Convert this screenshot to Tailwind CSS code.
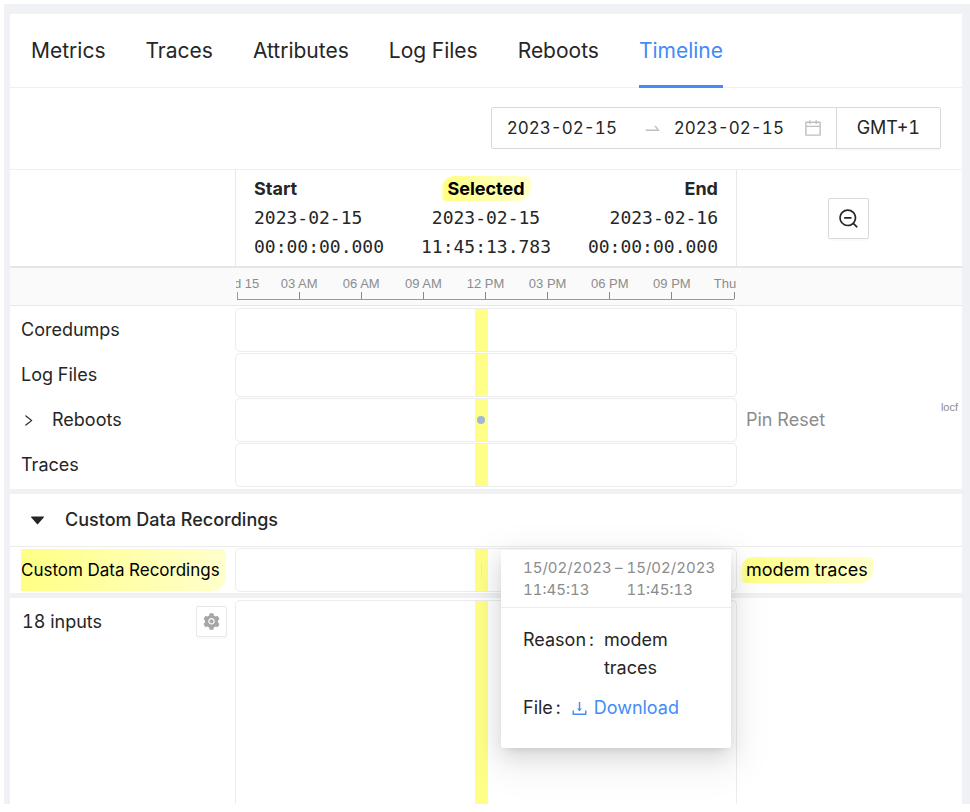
<!DOCTYPE html>
<html lang="en">
<head>
<meta charset="utf-8">
<meta name="viewport" content="width=device-width, initial-scale=1">
<title>Device Timeline</title>
<script src="https://cdn.jsdelivr.net/npm/@tailwindcss/browser@4"></script>
</head>
<body class="bg-white font-['Inter',sans-serif] text-[18px] leading-7 text-[#262626] tabular-nums">
<div class="flex min-h-screen flex-col pt-1 pb-2 pl-1">
<main class="flex flex-1 flex-col bg-[#f0f1f5] pt-[10px] pr-2 pl-[6px]">

  <!-- Tabs -->
  <nav class="flex gap-10 border-b border-[#f0f0f0] bg-white pl-[21px] text-[21px]">
    <a href="#" class="-mb-px border-b-3 border-transparent pt-[23px] pb-5">Metrics</a>
    <a href="#" class="-mb-px border-b-3 border-transparent pt-[23px] pb-5">Traces</a>
    <a href="#" class="-mb-px border-b-3 border-transparent pt-[23px] pb-5">Attributes</a>
    <a href="#" class="-mb-px border-b-3 border-transparent pt-[23px] pb-5">Log Files</a>
    <a href="#" class="-mb-px border-b-3 border-transparent pt-[23px] pb-5">Reboots</a>
    <a href="#" aria-current="page" class="-mb-px border-b-3 border-[#428bf9] pt-[23px] pb-5 text-[#428bf9]">Timeline</a>
  </nav>

  <!-- Date range and time zone -->
  <div class="flex justify-end border-b border-[#f0f0f0] bg-white pt-[19px] pr-[21px] pb-5">
    <div class="flex h-[42px] items-center rounded-l-xs border border-[#d9d9d9] pr-[13px] pl-[15px]">
      <input type="text" aria-label="Start date" value="2023-02-15" class="w-[136px] text-[17px] outline-none">
      <svg class="mr-3 size-[19px] fill-[#bfbfbf]" viewBox="0 0 1024 1024" aria-hidden="true"><path d="M873.1 596.2l-164-208A32 32 0 00684 376h-64.8c-6.7 0-10.4 7.7-6.3 13l144.3 183H152c-4.4 0-8 3.6-8 8v60c0 4.4 3.6 8 8 8h695.9c26.8 0 41.7-30.8 25.2-51.8z"/></svg>
      <input type="text" aria-label="End date" value="2023-02-15" class="w-[129px] text-[17px] outline-none">
      <svg class="size-5 fill-[#bfbfbf]" viewBox="0 0 1024 1024" aria-hidden="true"><path d="M880 184H712v-64c0-4.400-3.600-8-8-8h-56c-4.400 0-8 3.600-8 8v64H384v-64c0-4.400-3.600-8-8-8h-56c-4.400 0-8 3.600-8 8v64H144c-17.700 0-32 14.300-32 32v664c0 17.700 14.300 32 32 32h736c17.700 0 32-14.300 32-32V216c0-17.700-14.300-32-32-32zm-40 656H184V460h656v380zM184 392V256h128v48c0 4.400 3.600 8 8 8h56c4.400 0 8-3.600 8-8v-48h256v48c0 4.400 3.600 8 8 8h56c4.400 0 8-3.600 8-8v-48h128v136H184z"/></svg>
    </div>
    <button type="button" class="-ml-px h-[42px] rounded-r-xs border border-[#d9d9d9] px-5 shadow-[0_2px_0_rgba(0,0,0,0.02)]">GMT+1</button>
  </div>

  <!-- Range summary -->
  <div class="grid grid-cols-[225px_1fr_225px] border-b-2 border-[#e6e6e6] bg-white">
    <div></div>
    <div class="flex justify-between border-x border-[#e8e8e8] px-[18px] pt-[5px] pb-[5px] font-['DejaVu_Sans_Mono',monospace] leading-[29px]">
      <div>
        <div class="font-['Inter',sans-serif] leading-7 font-bold">Start</div>
        <div>2023-02-15</div>
        <div>00:00:00.000</div>
      </div>
      <div class="text-center">
        <div class="font-['Inter',sans-serif] leading-7 font-bold"><mark class="inline-block rounded-tl-[14px] rounded-tr-[5px] rounded-br-[14px] rounded-bl-[5px] bg-transparent bg-[linear-gradient(to_right,rgba(255,255,0,0.1),rgba(255,255,0,0.48)_4%,rgba(255,255,0,0.2))] px-[6px] leading-[25px] text-black">Selected</mark></div>
        <div>2023-02-15</div>
        <div>11:45:13.783</div>
      </div>
      <div class="text-right">
        <div class="font-['Inter',sans-serif] leading-7 font-bold">End</div>
        <div>2023-02-16</div>
        <div>00:00:00.000</div>
      </div>
    </div>
    <div class="flex items-center justify-center pr-[2px]">
      <button type="button" aria-label="Zoom out" class="flex size-[41px] items-center justify-center rounded-xs border border-[#d9d9d9] shadow-[0_2px_0_rgba(0,0,0,0.02)]">
        <svg class="size-[23px] fill-[#262626]" viewBox="0 0 1024 1024" aria-hidden="true"><path d="M637 443H325c-4.400 0-8 3.600-8 8v60c0 4.400 3.600 8 8 8h312c4.400 0 8-3.600 8-8v-60c0-4.400-3.600-8-8-8zm284 424L775 721c122.100-148.900 113.600-369.500-26-509-148-148.100-388.400-148.100-537 0-148.100 148.600-148.100 389 0 537 139.500 139.600 360.100 148.100 509 26l146 146c3.200 2.800 8.300 2.800 11 0l43-43c2.800-2.700 2.800-7.800 0-11zM696 696c-118.800 118.700-311.200 118.700-430 0-118.700-118.800-118.700-311.200 0-430 118.800-118.700 311.200-118.700 430 0 118.700 118.800 118.700 311.200 0 430z"/></svg>
      </button>
    </div>
  </div>

  <!-- Time axis -->
  <div class="grid grid-cols-[225px_1fr_225px] border-b border-[#e8e8e8] bg-[#fafafa] pt-2 pb-[5px]">
    <div></div>
    <div class="mx-px overflow-hidden">
      <div class="mr-[2px] ml-px flex justify-between border-b border-[#999] text-[13px] leading-4 whitespace-nowrap text-[#8c8c8c] font-['Liberation_Sans',Arial,sans-serif]">
        <div class="flex w-0 flex-col items-center"><span>Wed 15</span><i class="h-[7px] w-px shrink-0 bg-[#999]"></i></div>
        <div class="flex w-0 flex-col items-center"><span>03 AM</span><i class="h-[7px] w-px shrink-0 bg-[#888]"></i></div>
        <div class="flex w-0 flex-col items-center"><span>06 AM</span><i class="h-[7px] w-px shrink-0 bg-[#888]"></i></div>
        <div class="flex w-0 flex-col items-center"><span>09 AM</span><i class="h-[7px] w-px shrink-0 bg-[#888]"></i></div>
        <div class="flex w-0 flex-col items-center"><span>12 PM</span><i class="h-[7px] w-px shrink-0 bg-[#888]"></i></div>
        <div class="flex w-0 flex-col items-center"><span>03 PM</span><i class="h-[7px] w-px shrink-0 bg-[#888]"></i></div>
        <div class="flex w-0 flex-col items-center"><span>06 PM</span><i class="h-[7px] w-px shrink-0 bg-[#888]"></i></div>
        <div class="flex w-0 flex-col items-center"><span>09 PM</span><i class="h-[7px] w-px shrink-0 bg-[#888]"></i></div>
        <div class="flex w-0 flex-col items-center"><span>Thu 16</span><i class="h-[7px] w-px shrink-0 bg-[#888]"></i></div>
      </div>
    </div>
    <div></div>
  </div>

  <!-- Event rows -->
  <section class="grid auto-rows-[44px] grid-cols-[225px_1fr_225px] items-stretch gap-y-px bg-white py-[2px]">
    <div class="flex items-center pl-[11px]">Coredumps</div>
    <div class="flex rounded-[5px] border border-[#ececec]"><div class="ml-[47.7%] w-[13px] bg-[#ffff88]"></div></div>
    <div></div>

    <div class="flex items-center pl-[11px]">Log Files</div>
    <div class="flex rounded-[5px] border border-[#ececec]"><div class="ml-[47.7%] w-[13px] bg-[#ffff88]"></div></div>
    <div></div>

    <div class="flex items-center pl-[11px]">
      <button type="button" aria-label="Expand Reboots" class="mr-4"><svg class="size-[15px] fill-[#262626]" viewBox="0 0 1024 1024" aria-hidden="true"><path d="M765.7 486.8L314.9 134.7A7.97 7.97 0 00302 141v77.3c0 4.900 2.300 9.600 6.100 12.600l360 281.100-360 281.100c-3.900 3-6.100 7.700-6.100 12.600V883c0 6.700 7.700 10.400 12.900 6.300l450.800-352.100a31.960 31.960 0 000-50.400z"/></svg></button>Reboots
    </div>
    <div class="flex rounded-[5px] border border-[#ececec]"><div class="ml-[47.7%] flex w-[13px] items-center justify-center bg-[#ffff88]"><i class="size-2 rounded-full bg-[#a3b8d9]"></i></div></div>
    <div class="flex justify-between pr-1 pl-[9px] text-[#8c8c8c]">
      <span class="self-center">Pin Reset</span>
      <span class="pt-px text-[11px] leading-4 font-['Liberation_Sans',Arial,sans-serif]">locf</span>
    </div>

    <div class="flex items-center pl-[11px]">Traces</div>
    <div class="flex rounded-[5px] border border-[#ececec]"><div class="ml-[47.7%] w-[13px] bg-[#ffff88]"></div></div>
    <div></div>
  </section>

  <!-- Custom data recordings -->
  <h2 class="mt-[5px] border-b border-[#ececec] bg-white font-medium">
    <button type="button" aria-expanded="true" class="flex items-center gap-[18px] py-3 pl-[18px]">
      <svg class="size-[19px] fill-[#262626]" viewBox="0 0 1024 1024" aria-hidden="true"><path d="M840.4 300H183.6c-19.700 0-30.700 20.800-18.500 35l328.400 380.800c9.400 10.900 27.500 10.900 37 0L858.900 335c12.200-14.200 1.200-35-18.500-35z"/></svg>
      Custom Data Recordings
    </button>
  </h2>
  <section class="grid auto-rows-[44px] grid-cols-[225px_1fr_225px] bg-white py-px">
    <div class="flex py-px pr-[9px] pl-[11px]">
      <mark class="flex flex-1 items-center rounded-tr-[5px] rounded-br-[14px] bg-transparent bg-[linear-gradient(to_right,rgba(255,255,0,0.48),rgba(255,255,0,0.2))] text-[17px] whitespace-nowrap text-black">Custom Data Recordings</mark>
    </div>
    <div class="relative flex rounded-[5px] border border-[#ececec]">
      <div class="ml-[47.7%] flex w-[13px] items-center justify-center bg-[#ffff88]"><i class="h-4 w-px bg-[#f5f57c]"></i></div>

      <!-- Recording details popover -->
      <div role="dialog" aria-label="Recording details" class="absolute top-px right-[5px] z-10 w-[230px] rounded-xs bg-white shadow-[0_4px_8px_-5px_rgba(0,0,0,0.16),0_8px_22px_rgba(0,0,0,0.11),0_12px_38px_10px_rgba(0,0,0,0.06)]">
        <div class="flex gap-1 border-b border-[#ececec] pt-[7px] pb-[6px] pl-[22px] text-[15px] leading-[22px] text-[#8c8c8c]">
          <span class="w-[88px] shrink-0">15/02/2023 11:45:13</span><span>–</span><span class="w-[88px] shrink-0">15/02/2023 11:45:13</span>
        </div>
        <dl class="flex flex-col gap-3 pt-[18px] pr-[22px] pb-[26px] pl-[22px] text-[18px]">
          <div class="flex">
            <dt class="mr-[10px]">Reason<span class="ml-[3px]">:</span></dt>
            <dd class="w-20">modem traces</dd>
          </div>
          <div class="flex">
            <dt class="mr-[9px]">File<span class="ml-[3px]">:</span></dt>
            <dd><a href="#" class="flex items-center gap-[5px] text-[#428bf9]"><svg class="size-[19px] fill-current" viewBox="0 0 1024 1024" aria-hidden="true"><path d="M505.7 661a8 8 0 0012.600 0l112-141.700c4.100-5.200.4-12.900-6.300-12.900h-74.100V168c0-4.400-3.600-8-8-8h-60c-4.400 0-8 3.600-8 8v338.300H400c-6.700 0-10.400 7.700-6.300 12.900l112 141.800zM878 626h-60c-4.400 0-8 3.600-8 8v154H214V634c0-4.400-3.600-8-8-8h-60c-4.400 0-8 3.600-8 8v198c0 17.700 14.300 32 32 32h684c17.700 0 32-14.300 32-32V634c0-4.400-3.600-8-8-8z"/></svg>Download</a></dd>
          </div>
        </dl>
      </div>
    </div>
    <div class="flex items-center pl-[3px]">
      <mark class="rounded-tl-[14px] rounded-tr-[5px] rounded-br-[14px] rounded-bl-[5px] bg-transparent bg-[linear-gradient(to_right,rgba(255,255,0,0.1),rgba(255,255,0,0.48)_4%,rgba(255,255,0,0.2))] px-[6px] leading-[26px] text-black">modem traces</mark>
    </div>
  </section>

  <!-- Inputs -->
  <section class="mt-[5px] grid flex-1 grid-cols-[225px_1fr_225px] bg-white pt-[2px]">
    <div class="flex items-start justify-between pt-[6px] pr-2 pl-3">
      <span class="leading-8">18 inputs</span>
      <button type="button" aria-label="Configure inputs" class="flex size-[31px] items-center justify-center rounded-xs border border-[#e8e8e8] shadow-[0_2px_0_rgba(0,0,0,0.02)]">
        <svg class="size-[19px] fill-[#a6a6a6]" viewBox="0 0 1024 1024" aria-hidden="true"><path d="M512.500 390.600c-29.900 0-57.900 11.600-79.100 32.800-21.100 21.200-32.800 49.200-32.800 79.100 0 29.900 11.700 57.900 32.800 79.100 21.200 21.100 49.200 32.800 79.100 32.800 29.900 0 57.900-11.700 79.100-32.800 21.100-21.200 32.800-49.200 32.800-79.100 0-29.900-11.700-57.900-32.800-79.100a110.960 110.960 0 00-79.100-32.800zm412.300 235.500l-65.400-55.900c3.100-19 4.700-38.400 4.700-57.700s-1.600-38.800-4.700-57.700l65.400-55.900a32.030 32.030 0 009.300-35.200l-.9-2.600a442.500 442.500 0 00-79.600-137.700l-1.800-2.100a32.120 32.120 0 00-35.100-9.500l-81.200 28.900c-30-24.600-63.400-44-99.600-57.500l-15.700-84.900a32.050 32.050 0 00-25.800-25.700l-2.700-.5c-52-9.400-106.800-9.400-158.800 0l-2.700.5a32.050 32.050 0 00-25.800 25.700l-15.800 85.300a353.440 353.440 0 00-98.900 57.300l-81.800-29.100a32 32 0 00-35.100 9.500l-1.800 2.100a445.930 445.930 0 00-79.600 137.700l-.9 2.600c-4.500 12.500-.8 26.500 9.300 35.200l66.200 56.500c-3.100 18.800-4.600 38-4.600 57 0 19.200 1.500 38.400 4.600 57l-66 56.500a32.030 32.030 0 00-9.300 35.200l.9 2.600c18.100 50.300 44.800 96.800 79.600 137.700l1.800 2.100a32.120 32.120 0 0035.100 9.500l81.800-29.100c29.800 24.500 63 43.900 98.900 57.300l15.800 85.300a32.050 32.050 0 0025.800 25.700l2.700.5a448.270 448.270 0 00158.800 0l2.700-.5a32.050 32.050 0 0025.800-25.700l15.700-84.900c36.200-13.600 69.600-32.900 99.600-57.500l81.200 28.900a32 32 0 0035.100-9.500l1.800-2.100c34.800-41.100 61.500-87.400 79.600-137.700l.9-2.600c4.300-12.400.6-26.300-9.500-35zm-412.300 52.200c-97.100 0-175.800-78.700-175.800-175.800s78.700-175.800 175.800-175.800 175.800 78.700 175.800 175.800-78.700 175.800-175.800 175.800z"/></svg>
      </button>
    </div>
    <div class="flex rounded-t-[5px] border-x border-t border-[#ececec]"><div class="ml-[47.7%] w-[13px] bg-[#ffff88]"></div></div>
    <div></div>
  </section>
</main>
</div>
</body>
</html>
